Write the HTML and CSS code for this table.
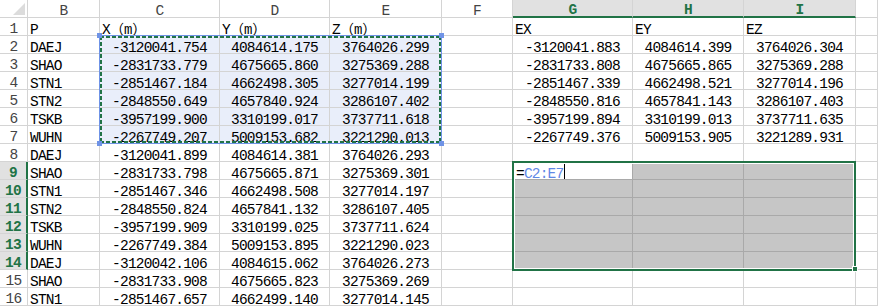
FILE: index.html
```html
<!DOCTYPE html>
<html lang="zh-CN">
<head>
    <meta charset="UTF-8">
    <title>Sheet1</title>
    <link rel="stylesheet" href="styles.css">
</head>
<body>
    <div class="sheet">
        <div class="row">
            <div class="corner"><span class="tri"></span></div>
            <div class="col-head">B</div>
            <div class="col-head">C</div>
            <div class="col-head">D</div>
            <div class="col-head">E</div>
            <div class="col-head">F</div>
            <div class="col-head sel-head">G</div>
            <div class="col-head sel-head">H</div>
            <div class="col-head sel-head">I</div>
            <div class="col-head"></div>
        </div>
        <div class="row">
            <div class="row-head">1</div>
            <div class="cell">P</div>
            <div class="cell">X<span class="wide">（m）</span></div>
            <div class="cell">Y<span class="wide">（m）</span></div>
            <div class="cell">Z<span class="wide">（m）</span></div>
            <div class="cell"></div>
            <div class="cell">EX</div>
            <div class="cell">EY</div>
            <div class="cell">EZ</div>
            <div class="cell"></div>
        </div>
        <div class="row">
            <div class="row-head">2</div>
            <div class="cell">DAEJ</div>
            <div class="cell num ref">-3120041.754</div>
            <div class="cell num ref">4084614.175</div>
            <div class="cell num ref">3764026.299</div>
            <div class="cell"></div>
            <div class="cell num">-3120041.883</div>
            <div class="cell num">4084614.399</div>
            <div class="cell num">3764026.304</div>
            <div class="cell"></div>
        </div>
        <div class="row">
            <div class="row-head">3</div>
            <div class="cell">SHAO</div>
            <div class="cell num ref">-2831733.779</div>
            <div class="cell num ref">4675665.860</div>
            <div class="cell num ref">3275369.288</div>
            <div class="cell"></div>
            <div class="cell num">-2831733.808</div>
            <div class="cell num">4675665.865</div>
            <div class="cell num">3275369.288</div>
            <div class="cell"></div>
        </div>
        <div class="row">
            <div class="row-head">4</div>
            <div class="cell">STN1</div>
            <div class="cell num ref">-2851467.184</div>
            <div class="cell num ref">4662498.305</div>
            <div class="cell num ref">3277014.199</div>
            <div class="cell"></div>
            <div class="cell num">-2851467.339</div>
            <div class="cell num">4662498.521</div>
            <div class="cell num">3277014.196</div>
            <div class="cell"></div>
        </div>
        <div class="row">
            <div class="row-head">5</div>
            <div class="cell">STN2</div>
            <div class="cell num ref">-2848550.649</div>
            <div class="cell num ref">4657840.924</div>
            <div class="cell num ref">3286107.402</div>
            <div class="cell"></div>
            <div class="cell num">-2848550.816</div>
            <div class="cell num">4657841.143</div>
            <div class="cell num">3286107.403</div>
            <div class="cell"></div>
        </div>
        <div class="row">
            <div class="row-head">6</div>
            <div class="cell">TSKB</div>
            <div class="cell num ref">-3957199.900</div>
            <div class="cell num ref">3310199.017</div>
            <div class="cell num ref">3737711.618</div>
            <div class="cell"></div>
            <div class="cell num">-3957199.894</div>
            <div class="cell num">3310199.013</div>
            <div class="cell num">3737711.635</div>
            <div class="cell"></div>
        </div>
        <div class="row">
            <div class="row-head">7</div>
            <div class="cell">WUHN</div>
            <div class="cell num ref">-2267749.207</div>
            <div class="cell num ref">5009153.682</div>
            <div class="cell num ref">3221290.013</div>
            <div class="cell"></div>
            <div class="cell num">-2267749.376</div>
            <div class="cell num">5009153.905</div>
            <div class="cell num">3221289.931</div>
            <div class="cell"></div>
        </div>
        <div class="row">
            <div class="row-head">8</div>
            <div class="cell">DAEJ</div>
            <div class="cell num">-3120041.899</div>
            <div class="cell num">4084614.381</div>
            <div class="cell num">3764026.293</div>
            <div class="cell"></div>
            <div class="cell"></div>
            <div class="cell"></div>
            <div class="cell"></div>
            <div class="cell"></div>
        </div>
        <div class="row">
            <div class="row-head sel-row">9</div>
            <div class="cell">SHAO</div>
            <div class="cell num">-2831733.798</div>
            <div class="cell num">4675665.871</div>
            <div class="cell num">3275369.301</div>
            <div class="cell"></div>
            <div class="cell sel active"><span class="eq">=</span><span class="rng">C2:E7</span><span class="caret"></span></div>
            <div class="cell sel"></div>
            <div class="cell sel"></div>
            <div class="cell"></div>
        </div>
        <div class="row">
            <div class="row-head sel-row">10</div>
            <div class="cell">STN1</div>
            <div class="cell num">-2851467.346</div>
            <div class="cell num">4662498.508</div>
            <div class="cell num">3277014.197</div>
            <div class="cell"></div>
            <div class="cell sel"></div>
            <div class="cell sel"></div>
            <div class="cell sel"></div>
            <div class="cell"></div>
        </div>
        <div class="row">
            <div class="row-head sel-row">11</div>
            <div class="cell">STN2</div>
            <div class="cell num">-2848550.824</div>
            <div class="cell num">4657841.132</div>
            <div class="cell num">3286107.405</div>
            <div class="cell"></div>
            <div class="cell sel"></div>
            <div class="cell sel"></div>
            <div class="cell sel"></div>
            <div class="cell"></div>
        </div>
        <div class="row">
            <div class="row-head sel-row">12</div>
            <div class="cell">TSKB</div>
            <div class="cell num">-3957199.909</div>
            <div class="cell num">3310199.025</div>
            <div class="cell num">3737711.624</div>
            <div class="cell"></div>
            <div class="cell sel"></div>
            <div class="cell sel"></div>
            <div class="cell sel"></div>
            <div class="cell"></div>
        </div>
        <div class="row">
            <div class="row-head sel-row">13</div>
            <div class="cell">WUHN</div>
            <div class="cell num">-2267749.384</div>
            <div class="cell num">5009153.895</div>
            <div class="cell num">3221290.023</div>
            <div class="cell"></div>
            <div class="cell sel"></div>
            <div class="cell sel"></div>
            <div class="cell sel"></div>
            <div class="cell"></div>
        </div>
        <div class="row">
            <div class="row-head sel-row">14</div>
            <div class="cell">DAEJ</div>
            <div class="cell num">-3120042.106</div>
            <div class="cell num">4084615.062</div>
            <div class="cell num">3764026.273</div>
            <div class="cell"></div>
            <div class="cell sel"></div>
            <div class="cell sel"></div>
            <div class="cell sel"></div>
            <div class="cell"></div>
        </div>
        <div class="row">
            <div class="row-head">15</div>
            <div class="cell">SHAO</div>
            <div class="cell num">-2831733.908</div>
            <div class="cell num">4675665.823</div>
            <div class="cell num">3275369.269</div>
            <div class="cell"></div>
            <div class="cell"></div>
            <div class="cell"></div>
            <div class="cell"></div>
            <div class="cell"></div>
        </div>
        <div class="row">
            <div class="row-head">16</div>
            <div class="cell">STN1</div>
            <div class="cell num">-2851467.657</div>
            <div class="cell num">4662499.140</div>
            <div class="cell num">3277014.145</div>
            <div class="cell"></div>
            <div class="cell"></div>
            <div class="cell"></div>
            <div class="cell"></div>
            <div class="cell"></div>
        </div>

        <!-- copy marquee / formula reference on C2:E7 -->
        <div class="marquee">
            <span class="grip tl"></span>
            <span class="grip tr"></span>
            <span class="grip bl"></span>
            <span class="grip br"></span>
        </div>
        <!-- selected range G9:I14 -->
        <div class="selection"><span class="fill-handle"></span></div>
    </div>
</body>
</html>
```

FILE: styles.css
```css
body {
    margin: 0;
    background: #fff;
    font-family: "Liberation Mono", "Noto Sans CJK SC", monospace;
    overflow: hidden;
}
.sheet {
    display: grid;
    grid-template-columns: 28px 72px 120px 110px 112px 71px 120px 111px 112px 22px;
    grid-auto-rows: 18px;
    position: relative;
    width: 878px;
}
.row {
    display: contents;
}
.row > div {
    box-sizing: border-box;
    border-right: 1px solid #d4d4d4;
    border-bottom: 1px solid #d4d4d4;
    display: flex;
    align-items: flex-end;
    font-size: 14.5px;
    letter-spacing: -0.8px;
    line-height: 9px;
    white-space: nowrap;
    color: #000;
}
.cell {
    padding-left: 2px;
}
.num {
    justify-content: center;
    padding-left: 0;
}
.wide {
    letter-spacing: 0;
    font-size: 14px;
}
.corner {
    justify-content: flex-end;
    padding: 0 2px 2px 0;
}
.tri {
    width: 0;
    height: 0;
    border-left: 12px solid transparent;
    border-bottom: 12px solid #dcdcdc;
}
.col-head,
.row-head {
    justify-content: center;
    color: #444 !important;
    line-height: 11px !important;
}
.sel-head {
    background: #e1e1e1;
    color: #217346 !important;
    font-weight: bold;
    border-bottom: 2px solid #217346 !important;
}
.sel-row {
    background: #e1e1e1;
    color: #217346 !important;
    font-weight: bold;
    border-right: 2px solid #217346 !important;
}
.row > .ref {
    background: #e9eefa;
}
.row > .sel {
    background: #c6c6c6;
    border-color: #a9a9a9;
}
.row > .active {
    background: #fff;
    padding-left: 3px;
}
.eq {
    color: #000;
}
.rng {
    color: #5f88e6;
}
.caret {
    align-self: stretch;
    width: 1px;
    margin-left: 1px;
    background: #000;
}
.marquee {
    position: absolute;
    grid-column: 3 / 6;
    grid-row: 3 / 9;
    top: -1px;
    left: -1px;
    right: 0;
    bottom: 0;
    border: 1px solid #6f93e6;
    background:
        repeating-linear-gradient(90deg, #217346 0 4px, transparent 4px 6px) left top / 100% 2px no-repeat,
        repeating-linear-gradient(90deg, #217346 0 4px, transparent 4px 6px) left bottom / 100% 2px no-repeat,
        repeating-linear-gradient(180deg, #217346 0 4px, transparent 4px 6px) left top / 2px 100% no-repeat,
        repeating-linear-gradient(180deg, #217346 0 4px, transparent 4px 6px) right top / 2px 100% no-repeat;
}
.grip {
    position: absolute;
    width: 5px;
    height: 5px;
    background: #6f93e6;
}
.tl { left: -3px; top: -3px; }
.tr { right: -3px; top: -3px; }
.bl { left: -3px; bottom: -3px; }
.br { right: -3px; bottom: -3px; }
.selection {
    position: absolute;
    grid-column: 7 / 10;
    grid-row: 10 / 16;
    top: -1px;
    left: -1px;
    right: 0;
    bottom: -1px;
    border: 2px solid #217346;
    box-shadow: inset 0 0 0 1px #fff;
}
.fill-handle {
    position: absolute;
    right: -4px;
    bottom: -3px;
    width: 4px;
    height: 4px;
    background: #217346;
    border: 1px solid #fff;
}
```
